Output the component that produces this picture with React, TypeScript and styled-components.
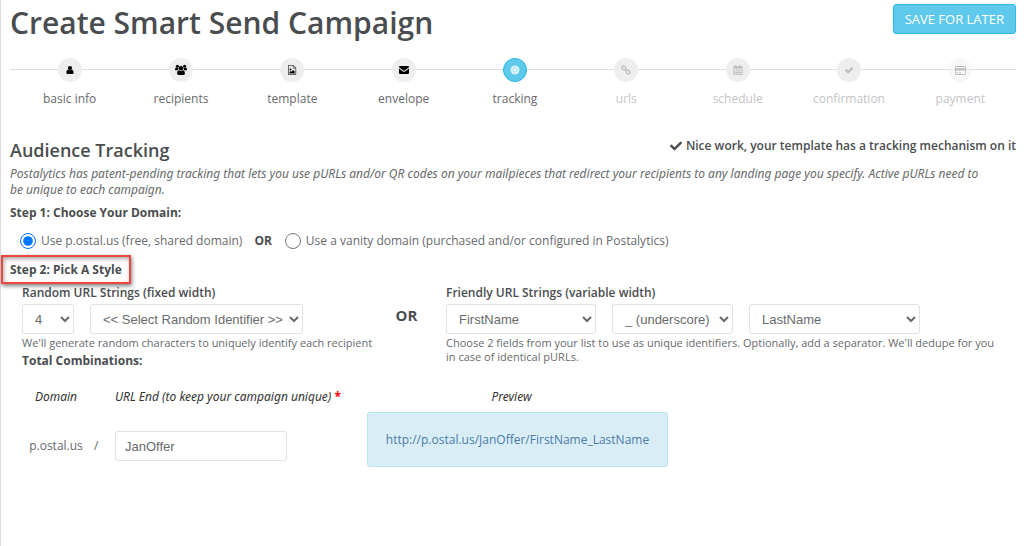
import React from "react";
import styled, { createGlobalStyle, css } from "styled-components";
import { FaCheck } from "react-icons/fa";

const GlobalStyle = createGlobalStyle`
  *, *::before, *::after { box-sizing: border-box; }
  body {
    margin: 0;
    background: #fff;
    color: #676a6c;
    font-family: "Open Sans", "Segoe UI", sans-serif;
    font-size: 12px;
    line-height: 16px;
  }
  h1, h2, h3, p { margin: 0; }
`;

const Page = styled.main`
  min-height: 100vh;
  padding: 4px 8px 16px 9px;
  border-left: 1px solid #dcdcdc;
`;

const Header = styled.header`
  display: flex;
  justify-content: space-between;
  align-items: flex-start;
  height: 40px;
`;

const Title = styled.h1`
  color: #4a4d4f;
  font-size: 30px;
  line-height: 38px;
  font-weight: 600;
`;

const SaveButton = styled.button`
  height: 30px;
  padding: 0 11px;
  border: 1px solid #2cbce8;
  border-radius: 3px;
  background: #5fc9ec;
  color: #fff;
  font: inherit;
  font-size: 13px;
  white-space: nowrap;
`;

const Steps = styled.ol`
  display: grid;
  grid-template-columns: repeat(9, 1fr);
  margin: 14px 0 0;
  padding: 0 0 0 4px;
  list-style: none;
  background: linear-gradient(#dfdfdf, #dfdfdf) 0 11px / 100% 1px no-repeat;
`;

type StepState = "done" | "current" | "todo" | "last";

const Step = styled.li<{ $state: StepState }>`
  display: flex;
  flex-direction: column;
  align-items: center;
  gap: 9px;
  color: ${(p) => (p.$state === "todo" || p.$state === "last" ? "#c3c4c5" : "#676a6c")};
`;

const Bubble = styled.span<{ $state: StepState }>`
  display: flex;
  align-items: center;
  justify-content: center;
  width: 24px;
  height: 24px;
  border-radius: 50%;
  background: #eee;
  color: #000;
  ${(p) => p.$state === "current" && css`
    background: #5fc9ec;
    border: 1px solid #23b7e5;
    color: #fff;
  `}
  ${(p) => p.$state === "todo" && css`color: #bdbdbd;`}
  ${(p) => p.$state === "last" && css`
    background: rgba(238, 238, 238, 0.4);
    color: #bdbdbd;
  `}
`;

const SectionHead = styled.div`
  display: flex;
  justify-content: space-between;
  align-items: flex-start;
  margin-top: 31px;
`;

const SectionTitle = styled.h2`
  color: #4a4d4f;
  font-size: 18px;
  line-height: 24px;
  font-weight: 600;
`;

const Notice = styled.p`
  display: flex;
  align-items: center;
  gap: 4px;
  color: #4a4d4f;
  font-weight: 600;
  white-space: nowrap;
`;

const Intro = styled.p`
  margin-top: 4px;
  padding-right: 28px;
  font-family: "Noto Sans", "Open Sans", sans-serif;
  font-style: italic;
`;

const StepHeading = styled.h3`
  position: relative;
  width: max-content;
  margin-top: 7px;
  color: #4a4d4f;
  font-size: 12px;
  line-height: 16px;
  font-weight: 700;
`;

const MarkedHeading = styled(StepHeading)`
  margin-top: 13px;
  &::after {
    content: "";
    position: absolute;
    inset: -7px -9px -6px -9px;
    border: 2px solid #ef4444;
    box-shadow: 1px 2px 4px rgba(0, 0, 0, 0.5), inset 1px 2px 4px rgba(0, 0, 0, 0.35);
    pointer-events: none;
  }
`;

const RadioRow = styled.div`
  display: flex;
  align-items: center;
  margin: 12px 0 0 10px;
`;

const RadioLabel = styled.label`
  display: flex;
  align-items: center;
  gap: 5px;
  input {
    width: 16px;
    height: 16px;
    margin: 0;
    accent-color: #0075ff;
  }
`;

const InlineOr = styled.strong`
  margin: 0 13px 0 12px;
  color: #4a4d4f;
`;

const Styles = styled.div`
  display: grid;
  grid-template-columns: 345fr 79fr 570fr;
  margin: 7px 0 0 12px;
`;

const Group = styled.fieldset`
  min-width: 0;
  margin: 0;
  padding: 0;
  border: 0;
`;

const GroupTitle = styled.legend`
  padding: 0;
  color: #4a4d4f;
  font-weight: 600;
`;

const Fields = styled.div`
  display: flex;
  gap: 16px;
  margin-top: 3px;
`;

const control = css`
  height: 30px;
  border: 1px solid #e0e1e2;
  border-radius: 3px;
  background: #fff;
  color: #676a6c;
  font-family: "Liberation Sans", Arial, sans-serif;
  font-size: 13px;
`;

const Select = styled.select<{ $width: number }>`
  ${control}
  width: ${(p) => p.$width}px;
  padding: 0 0 0 8px;
`;

const TextInput = styled.input`
  ${control}
  width: 172px;
  margin-bottom: 6px;
  padding: 0 9px;
`;

const Help = styled.p`
  font-size: 11px;
  line-height: 14px;
  margin-top: 2px;
  white-space: nowrap;
`;

const WideHelp = styled(Help)`
  padding-right: 16px;
  white-space: normal;
`;

const Total = styled.strong`
  display: block;
  margin-top: 3px;
  color: #4a4d4f;
`;

const BigOr = styled.strong`
  justify-self: center;
  margin-top: 20px;
  color: #4a4d4f;
  font-size: 15px;
  line-height: 20px;
`;

const UrlGrid = styled.div`
  display: grid;
  grid-template-columns: 68px 25px 252px 301px;
  align-items: end;
  row-gap: 7px;
  margin: 20px 0 0 12px;
`;

const ColumnLabel = styled.label`
  color: #333;
  font-family: "Noto Sans", "Open Sans", sans-serif;
  font-style: italic;
`;

const CenteredLabel = styled(ColumnLabel)`
  padding-right: 12px;
  text-align: center;
`;

const DomainLabel = styled(ColumnLabel)`
  text-align: center;
`;

const Required = styled.span`
  color: #f00;
  font-style: normal;
  font-weight: 700;
`;

const DomainText = styled.span`
  margin-bottom: 6px;
  line-height: 30px;
  text-align: center;
`;

const Slash = styled(DomainText)`
  padding-left: 4px;
  text-align: left;
`;

const Preview = styled.output`
  display: flex;
  align-items: center;
  justify-content: center;
  height: 55px;
  border: 1px solid #bce3f3;
  border-radius: 3px;
  background: #d9edf7;
  color: #4b7ba6;
`;

const Icon = ({ children, size = 10 }: { children: React.ReactNode; size?: number }) => (
  <svg width={size} height={size} viewBox="0 0 10 10" fill="currentColor" aria-hidden="true">
    {children}
  </svg>
);

const steps: { label: string; state: StepState; icon: React.ReactNode }[] = [
  {
    label: "basic info",
    state: "done",
    icon: (
      <Icon>
        <circle cx="5" cy="3" r="2.1" />
        <path d="M3.2 4.6C1.8 5 1.4 6.2 1.4 7.8Q1.4 9 2.6 9H7.4Q8.6 9 8.6 7.8C8.6 6.2 8.2 5 6.8 4.6Q5 6 3.2 4.6Z" />
      </Icon>
    ),
  },
  {
    label: "recipients",
    state: "done",
    icon: (
      <Icon size={12}>
        <circle cx="2" cy="1.9" r="1.3" />
        <circle cx="8" cy="1.9" r="1.3" />
        <circle cx="5" cy="3.5" r="1.9" />
        <path d="M.9 3Q0 3.3 0 4.5Q0 5.2.7 5.2H2.8Q2.4 4.3 2.7 3.4Q1.8 3.5.9 3ZM9.1 3Q10 3.3 10 4.5Q10 5.2 9.3 5.2H7.2Q7.6 4.3 7.3 3.4Q8.2 3.5 9.1 3ZM3.3 5.2Q1.7 5.6 1.7 8Q1.7 9.2 2.9 9.2H7.1Q8.3 9.2 8.3 8Q8.3 5.6 6.7 5.2Q5 6.3 3.3 5.2Z" />
      </Icon>
    ),
  },
  {
    label: "template",
    state: "done",
    icon: (
      <Icon>
        <path fillRule="evenodd" opacity=".7" d="M1 0H6.5L9.2 2.7V10H1ZM1.8.8V9.2H8.4V3.4H5.9V.8ZM6.6 1.1V2.7H8.2Z" />
        <circle cx="3.5" cy="4.5" r="1" />
        <path d="M2.5 8.5V7L3.6 6.1L4.4 6.8L6.2 5L7.7 6.5V8.5Z" />
      </Icon>
    ),
  },
  {
    label: "envelope",
    state: "done",
    icon: (
      <Icon>
        <path d="M0 2Q0 1 1 1H9Q10 1 10 2V2.3L5.6 5.6Q5 6 4.4 5.6L0 2.3ZM0 3.5L4 6.4Q5 7.1 6 6.4L10 3.5V8Q10 9 9 9H1Q0 9 0 8Z" />
      </Icon>
    ),
  },
  {
    label: "tracking",
    state: "current",
    icon: (
      <Icon>
        <circle cx="5" cy="5" r="4.5" opacity=".75" />
        <circle cx="5" cy="5" r="2" fill="none" stroke="#5fc9ec" strokeWidth=".5" opacity=".6" />
        <circle cx="5" cy="5" r="1" />
      </Icon>
    ),
  },
  {
    label: "urls",
    state: "todo",
    icon: (
      <Icon>
        <g fill="none" stroke="currentColor" strokeWidth="1.3">
          <rect x=".8" y="1.3" width="4.2" height="3.2" rx="1.5" transform="rotate(45 3 2.9)" />
          <rect x="5" y="5.4" width="4.2" height="3.2" rx="1.5" transform="rotate(45 7 7)" />
          <path d="M3.7 3.7L6.2 6.2" />
        </g>
      </Icon>
    ),
  },
  {
    label: "schedule",
    state: "todo",
    icon: (
      <Icon>
        <path fillRule="evenodd" d="M.3 1.3H2V0H3.3V1.3H6.7V0H8V1.3H9.7V10H.3ZM1.2 3.5V5H2.8V3.5ZM3.5 3.5V5H4.8V3.5ZM5.4 3.5V5H6.7V3.5ZM7.3 3.5V5H8.9V3.5ZM1.2 5.6V7H2.8V5.6ZM3.5 5.6V7H4.8V5.6ZM5.4 5.6V7H6.7V5.6ZM7.3 5.6V7H8.9V5.6ZM1.2 7.7V9.2H2.8V7.7ZM3.5 7.7V9.2H4.8V7.7ZM5.4 7.7V9.2H6.7V7.7ZM7.3 7.7V9.2H8.9V7.7Z" />
      </Icon>
    ),
  },
  {
    label: "confirmation",
    state: "todo",
    icon: (
      <Icon>
        <path d="M2.3 3.7L4.2 5.6L7.7 2L9.3 3.6L4.2 8.7L.7 5.2Z" />
      </Icon>
    ),
  },
  {
    label: "payment",
    state: "last",
    icon: (
      <Icon size={11}>
        <path fillRule="evenodd" d="M1 1H9Q10 1 10 2V8Q10 9 9 9H1Q0 9 0 8V2Q0 1 1 1ZM.8 1.8V3H9.2V1.8ZM.8 5V8.2H9.2V5ZM1.5 6.7H2.8V7.5H1.5ZM3.5 6.7H5.5V7.5H3.5Z" />
      </Icon>
    ),
  },
];

export default function App() {
  return (
    <>
      <GlobalStyle />
      <Page>
        <Header>
          <Title>Create Smart Send Campaign</Title>
          <SaveButton type="button">SAVE FOR LATER</SaveButton>
        </Header>

        <Steps>
          {steps.map((s) => (
            <Step key={s.label} $state={s.state} aria-current={s.state === "current" ? "step" : undefined}>
              <Bubble $state={s.state}>{s.icon}</Bubble>
              {s.label}
            </Step>
          ))}
        </Steps>

        <SectionHead>
          <SectionTitle>Audience Tracking</SectionTitle>
          <Notice>
            <FaCheck size={12} aria-hidden="true" />
            Nice work, your template has a tracking mechanism on it
          </Notice>
        </SectionHead>
        <Intro>
          Postalytics has patent-pending tracking that lets you use pURLs and/or QR codes on your mailpieces that
          redirect your recipients to any landing page you specify. Active pURLs need to be unique to each campaign.
        </Intro>

        <StepHeading>Step 1: Choose Your Domain:</StepHeading>
        <RadioRow>
          <RadioLabel>
            <input type="radio" name="domain" defaultChecked />
            Use p.ostal.us (free, shared domain)
          </RadioLabel>
          <InlineOr>OR</InlineOr>
          <RadioLabel>
            <input type="radio" name="domain" />
            Use a vanity domain (purchased and/or configured in Postalytics)
          </RadioLabel>
        </RadioRow>

        <MarkedHeading>Step 2: Pick A Style</MarkedHeading>
        <Styles>
          <Group>
            <GroupTitle>Random URL Strings (fixed width)</GroupTitle>
            <Fields>
              <Select $width={52} aria-label="Length"><option>4</option></Select>
              <Select $width={213} aria-label="Random identifier">
                <option>&lt;&lt; Select Random Identifier &gt;&gt;</option>
              </Select>
            </Fields>
            <Help>We'll generate random characters to uniquely identify each recipient</Help>
            <Total>Total Combinations:</Total>
          </Group>
          <BigOr>OR</BigOr>
          <Group>
            <GroupTitle>Friendly URL Strings (variable width)</GroupTitle>
            <Fields>
              <Select $width={150} aria-label="First field"><option>FirstName</option></Select>
              <Select $width={121} aria-label="Separator"><option>_ (underscore)</option></Select>
              <Select $width={171} aria-label="Second field"><option>LastName</option></Select>
            </Fields>
            <WideHelp>
              Choose 2 fields from your list to use as unique identifiers. Optionally, add a separator. We'll dedupe
              for you in case of identical pURLs.
            </WideHelp>
          </Group>
        </Styles>

        <UrlGrid>
          <DomainLabel as="span">Domain</DomainLabel>
          <span />
          <ColumnLabel htmlFor="url-end">
            URL End (to keep your campaign unique) <Required>*</Required>
          </ColumnLabel>
          <CenteredLabel htmlFor="preview">Preview</CenteredLabel>
          <DomainText>p.ostal.us</DomainText>
          <Slash>/</Slash>
          <TextInput id="url-end" defaultValue="JanOffer" />
          <Preview id="preview">http://p.ostal.us/JanOffer/FirstName_LastName</Preview>
        </UrlGrid>
      </Page>
    </>
  );
}
